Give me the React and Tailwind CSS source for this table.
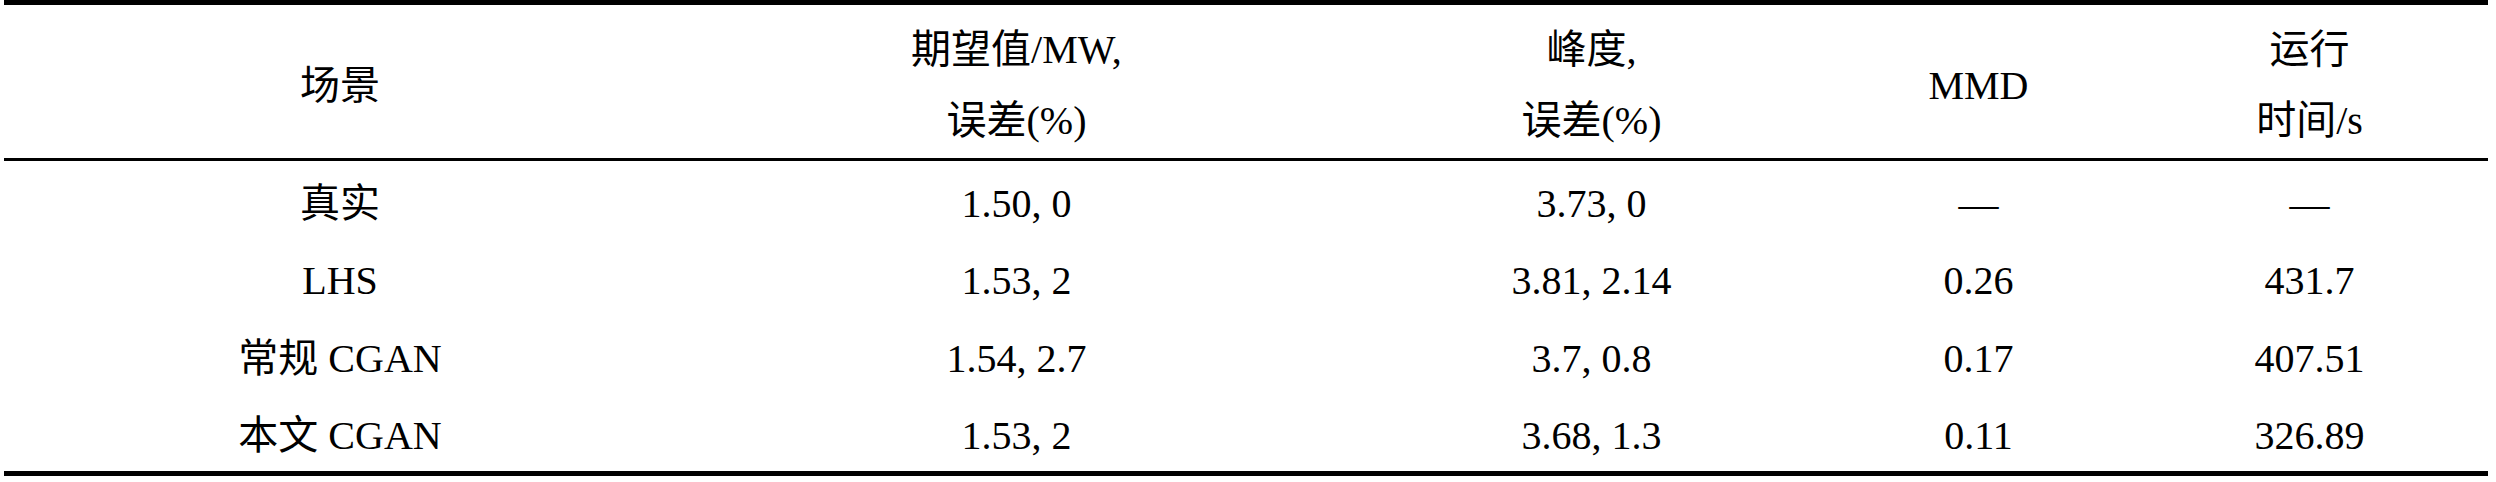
import React from 'react';

const cols = 'grid grid-cols-[672px_681px_469px_305px_357px] text-center';

const rows = [
    ['真实', '1.50, 0', '3.73, 0', '—', '—'],
    ['LHS', '1.53, 2', '3.81, 2.14', '0.26', '431.7'],
    ['常规 CGAN', '1.54, 2.7', '3.7, 0.8', '0.17', '407.51'],
    ['本文 CGAN', '1.53, 2', '3.68, 1.3', '0.11', '326.89'],
];

export default function App() {
    return (
        <div className="w-[2496px] h-[482px] bg-white text-black font-['Liberation_Serif','Noto_Sans_CJK_SC',serif] text-[40px]">
            <div id="table" className="ml-[4px] w-[2484px] border-t-[5px] border-b-[5px] border-black">
                <div id="header" className={`${cols} h-[156px] border-b-[3px] border-black items-center leading-[71px] pt-[7px]`}>
                    <div>场景</div>
                    <div>
                        <div>期望值/MW,</div>
                        <div>误差(%)</div>
                    </div>
                    <div>
                        <div>峰度,</div>
                        <div>误差(%)</div>
                    </div>
                    <div>MMD</div>
                    <div>
                        <div>运行</div>
                        <div>时间/s</div>
                    </div>
                </div>
                <div id="body">
                    {rows.map((row) => (
                        <div key={row[0]} className={`${cols} h-[77.5px] pt-[8px] items-center leading-none`}>
                            {row.map((cell, i) => (
                                <div key={i}>{cell}</div>
                            ))}
                        </div>
                    ))}
                </div>
            </div>
        </div>
    );
}
